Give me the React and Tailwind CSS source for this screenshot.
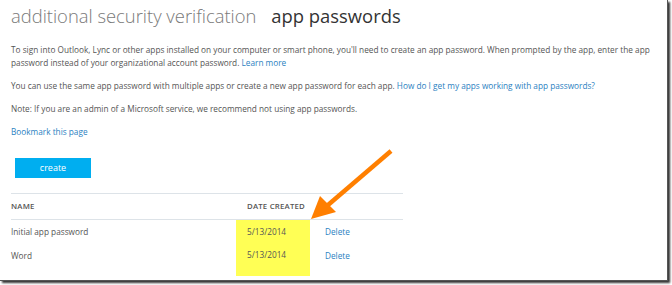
import React from "react";

export default function App() {
  const font = { fontFamily: '"Open Sans", "Noto Sans", sans-serif' };
  return (
    <div className="w-[672px] h-[285px] bg-white relative overflow-hidden" style={font}>
      <div className="w-[668px] h-[281px] bg-white shadow-[2px_2px_2px_#333] border-r border-b border-[#555] relative">
        <div className="pl-[11px] pt-[3px]">
          <div className="flex items-baseline gap-[15px] leading-[26px]">
            <span className="text-[18.4px] font-light text-[#7a7a7a]">additional security verification</span>
            <span className="text-[18.4px] text-[#333]">app passwords</span>
          </div>
          <div className="mt-[14px] text-[8.25px] leading-[13px] text-[#555] pr-[12px]">
            <p>
              To sign into Outlook, Lync or other apps installed on your computer or smart phone, you'll need to create an app password. When prompted by the app, enter the app password instead of your organizational account password.{" "}
              <span className="text-[#2b7fc1]">Learn more</span>
            </p>
            <p className="mt-[10px]">
              You can use the same app password with multiple apps or create a new app password for each app.{" "}
              <span className="text-[#2b7fc1]">How do I get my apps working with app passwords?</span>
            </p>
            <p className="mt-[10px]">Note: If you are an admin of a Microsoft service, we recommend not using app passwords.</p>
            <p className="mt-[10px] text-[#2b7fc1]">Bookmark this page</p>
          </div>
          <div className="mt-[20px] ml-[4px] w-[76px] h-[20px] bg-[#00aef0] text-white text-[9px] flex items-center justify-center">
            create
          </div>
          <div className="mt-[15px] w-[392px] border-t border-[#dde3e8]">
            <div className="flex items-center h-[26px] text-[7.8px] font-semibold text-[#555] tracking-[0.2px] border-b border-[#dde3e8]">
              <div className="w-[236px]">NAME</div>
              <div>DATE CREATED</div>
            </div>
            <div className="flex items-center h-[24px] text-[8.25px] text-[#555]">
              <div className="w-[225px]">Initial app password</div>
              <div className="w-[74px] h-full bg-[#ffff55] flex items-center pl-[11px]">5/13/2014</div>
              <div className="pl-[15px] text-[#2b7fc1]">Delete</div>
            </div>
            <div className="flex items-center h-[32px] text-[8.25px] text-[#555]">
              <div className="w-[225px] pb-[8px]">Word</div>
              <div className="w-[74px] h-full bg-[#ffff55] flex pt-[5px] pl-[11px]">5/13/2014</div>
              <div className="pl-[15px] pb-[8px] text-[#2b7fc1]">Delete</div>
            </div>
          </div>
        </div>
        <svg className="absolute left-0 top-0" width="668" height="281" viewBox="0 0 668 281">
          <line x1="391" y1="151" x2="328" y2="205" stroke="#ff7f00" strokeWidth="4.5" strokeLinecap="butt" />
          <polygon points="311,219 320,196 336,212" fill="#ff7f00" />
        </svg>
      </div>
    </div>
  );
}
